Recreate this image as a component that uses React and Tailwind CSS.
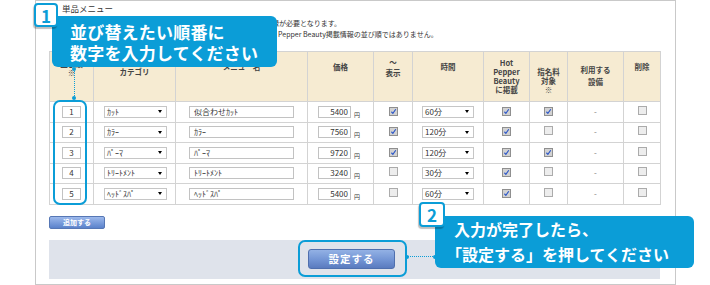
const rows = [
  { n: '1', cat: 'ｶｯﾄ', name: '似合わせｶｯﾄ', price: '5400', show: true, time: '60分', hpb: true, nom: true },
  { n: '2', cat: 'ｶﾗｰ', name: 'ｶﾗｰ', price: '7560', show: true, time: '120分', hpb: true, nom: false },
  { n: '3', cat: 'ﾊﾟｰﾏ', name: 'ﾊﾟｰﾏ', price: '9720', show: true, time: '120分', hpb: true, nom: true },
  { n: '4', cat: 'ﾄﾘｰﾄﾒﾝﾄ', name: 'ﾄﾘｰﾄﾒﾝﾄ', price: '3240', show: false, time: '30分', hpb: true, nom: false },
  { n: '5', cat: 'ﾍｯﾄﾞｽﾊﾟ', name: 'ﾍｯﾄﾞｽﾊﾟ', price: '5400', show: false, time: '60分', hpb: true, nom: false },
];

const Check = ({ on }) => (
  <span
    className={`inline-flex h-[9px] w-[9px] items-center justify-center border ${
      on ? 'border-[#8f8f8f] bg-[#d2d2d2]' : 'border-[#ababab] bg-[#ededed]'
    }`}
  >
    {on && (
      <svg viewBox="0 0 8 8" className="h-[7px] w-[7px]">
        <path d="M1.6 4.3 L3.3 6.1 L6.6 1.4" fill="none" stroke="#2b56c9" strokeWidth="1.3" />
      </svg>
    )}
  </span>
);

const Select = ({ value, className }) => (
  <div className={`flex h-[12px] items-center justify-between border border-[#c6c6c6] bg-white pl-[2px] pr-[4px] ${className}`}>
    <span className="leading-none">{value}</span>
    <span className="h-0 w-0 border-x-[2.5px] border-t-[3px] border-x-transparent border-t-black" />
  </div>
);

const Field = ({ value, className }) => (
  <div className={`flex h-[12px] items-center border border-[#c2c2c2] bg-white leading-none ${className}`}>{value}</div>
);

const Dot = ({ className }) => <span className={`absolute h-[4px] w-[4px] rounded-full bg-[#0b9dd7] ${className}`} />;

const Badge = ({ n, className }) => (
  <div
    className={`absolute flex h-[24px] w-[24px] items-center justify-center rounded-[4px] border-2 border-[#0b9dd7] bg-white text-[17px] font-bold leading-none text-[#0b9dd7] shadow-[-1px_2px_1px_rgba(0,0,0,0.25)] ${className}`}
  >
    {n}
  </div>
);

export default function App() {
  return (
    <div className="relative h-[285px] w-[710px] overflow-hidden bg-white font-['Noto_Sans_CJK_JP',sans-serif] text-[#333]">
      <div className="ml-[35px] h-[285px] w-[641px] border border-[#c9c9c9] pl-[13px] pt-[2px]">
        <p className="pl-[13px] text-[8.5px] leading-[10px]">単品メニュー</p>
        <div className="mt-[5px] pl-[13px] text-[7px] leading-[11px] whitespace-nowrap">
          <p>※指名料対象にチェックを入れる場合は、スタッフ毎に指名料の登録が必要となります。</p>
          <p>※ここで設定した並び順は、サロンボード上での表示順であり、Hot Pepper Beauty掲載情報の並び順ではありません。</p>
        </div>

        <table className="mt-[11px] w-[611px] table-fixed border-collapse text-[8px]">
          <colgroup>
            <col className="w-[44px]" />
            <col className="w-[82px]" />
            <col className="w-[132px]" />
            <col className="w-[66px]" />
            <col className="w-[39px]" />
            <col className="w-[71px]" />
            <col className="w-[46px]" />
            <col className="w-[38px]" />
            <col className="w-[56px]" />
            <col className="w-[37px]" />
          </colgroup>
          <thead>
            <tr className="h-[50px] bg-[#f6ebd2] text-[7.5px] font-bold leading-[9px] text-[#444]">
              <th className="border border-[#d3d3d3] pt-[7px] align-top font-bold">並び順<br />※</th>
              <th className="border border-[#d3d3d3] pt-[15px] align-top font-bold">カテゴリ</th>
              <th className="border border-[#d3d3d3] pt-[10px] align-top font-bold">メニュー名</th>
              <th className="border border-[#d3d3d3] pt-[10px] align-top font-bold">価格</th>
              <th className="border border-[#d3d3d3] pt-[4px] align-top font-bold leading-[11px]">〜<br />表示</th>
              <th className="border border-[#d3d3d3] pt-[10px] align-top font-bold">時間</th>
              <th className="border border-[#d3d3d3] pt-[6px] align-top font-bold">Hot<br />Pepper<br />Beauty<br />に掲載</th>
              <th className="border border-[#d3d3d3] pt-[15px] align-top font-bold">指名料<br />対象<br />※</th>
              <th className="border border-[#d3d3d3] pt-[12px] align-top font-bold leading-[12px]">利用する<br />設備</th>
              <th className="border border-[#d3d3d3] pt-[10px] align-top font-bold">削除</th>
            </tr>
          </thead>
          <tbody>
            {rows.map((r) => (
              <tr key={r.n} className="h-[20.5px]">
                <td className="border border-[#d3d3d3] p-0">
                  <div className="flex justify-center">
                    <Field value={r.n} className="w-[19px] justify-center" />
                  </div>
                </td>
                <td className="border border-[#d3d3d3] p-0 pl-[10px]">
                  <Select value={r.cat} className="w-[63px]" />
                </td>
                <td className="border border-[#d3d3d3] p-0 pl-[13px]">
                  <Field value={r.name} className="w-[105px] pl-[4px]" />
                </td>
                <td className="border border-[#d3d3d3] p-0 pl-[10px]">
                  <div className="flex items-end gap-[3px]">
                    <Field value={r.price} className="w-[33px] justify-end pr-[2px]" />
                    <span className="text-[6px] leading-none">円</span>
                  </div>
                </td>
                <td className="border border-[#d3d3d3] p-0 text-center">
                  <Check on={r.show} />
                </td>
                <td className="border border-[#d3d3d3] p-0 pl-[9px]">
                  <Select value={r.time} className="w-[52px]" />
                </td>
                <td className="border border-[#d3d3d3] p-0 text-center">
                  <Check on={r.hpb} />
                </td>
                <td className="border border-[#d3d3d3] p-0 text-center">
                  <Check on={r.nom} />
                </td>
                <td className="border border-[#d3d3d3] p-0 text-center text-[#777]">-</td>
                <td className="border border-[#d3d3d3] p-0 text-center">
                  <Check on={false} />
                </td>
              </tr>
            ))}
          </tbody>
        </table>

        <button className="mt-[11px] flex h-[13px] w-[56px] items-center justify-center rounded-[2px] border border-[#5677b5] bg-linear-to-b from-[#9db9ec] to-[#5b82cb] text-[7px] font-bold leading-none text-white">
          追加する
        </button>

        <div className="mt-[11px] flex h-[39px] w-[611px] items-center justify-center bg-[#dfe3eb]">
          <button className="-ml-[6px] flex h-[20px] w-[87px] items-center justify-center rounded-[3px] border border-[#4f6fae] bg-linear-to-b from-[#93b1e4] via-[#7597d6] to-[#5a7bbf] text-[10.5px] font-bold tracking-[1px] leading-none text-white">
            設定する
          </button>
        </div>
      </div>

      {/* callout 1 */}
      <div className="absolute left-[53px] top-[100px] h-[105px] w-[34px] rounded-[7px] border-2 border-[#0b9dd7]" />
      <div className="absolute left-[73.5px] top-[69px] h-[29px] border-l-[1.5px] border-dotted border-[#0b9dd7]" />
      <Dot className="left-[72px] top-[67px]" />
      <Dot className="left-[72px] top-[96px]" />
      <div className="absolute left-[52px] top-[16px] h-[51px] w-[225px] rounded-[6px] bg-[#0b9dd7] pl-[18px] pt-[5px] text-[17px] font-bold leading-[21px] tracking-[0.2px] text-white">
        <p>並び替えたい順番に</p>
        <p>数字を入力してください</p>
      </div>
      <Badge n="1" className="left-[34px] top-[3px]" />

      {/* callout 2 */}
      <div className="absolute left-[298px] top-[240px] h-[37px] w-[109px] rounded-[7px] border-2 border-[#0b9dd7]" />
      <div className="absolute left-[408px] top-[256px] w-[27px] border-t-[1.5px] border-dotted border-[#0b9dd7]" />
      <Dot className="left-[405px] top-[255px]" />
      <Dot className="left-[433px] top-[255px]" />
      <div className="absolute left-[435px] top-[216px] flex h-[52px] w-[259px] flex-col justify-center rounded-[6px] bg-[#0b9dd7] pl-[11px] text-[16px] font-bold leading-[25px] text-white">
        <p className="pl-[8px]">入力が完了したら、</p>
        <p>「設定する」を押してください</p>
      </div>
      <Badge n="2" className="left-[419px] top-[202px] h-[25px] w-[26px]" />
    </div>
  );
}
